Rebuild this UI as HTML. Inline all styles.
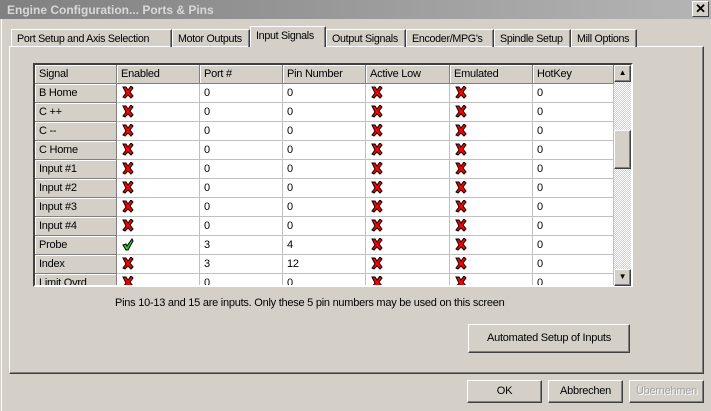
<!DOCTYPE html>
<html><head><style>
*{box-sizing:border-box;margin:0;padding:0}
body{width:711px;height:411px;background:#d4d0c8;font-family:"Liberation Sans",sans-serif;font-size:11px;letter-spacing:-0.25px;color:#000;position:relative;overflow:hidden}
.a{position:absolute}
.title{left:0;top:0;width:711px;height:19px;background:linear-gradient(90deg,#808080,#b5b5b5);color:#d8d8d8;font-weight:bold;font-size:12px;letter-spacing:0;padding:3px 0 0 7px}
.close{left:692px;top:1px;width:17px;height:16px;background:#d4d0c8;border:1px solid;border-color:#fff #404040 #404040 #fff;font-size:13px;text-align:center;line-height:13px;font-weight:bold}
.tab{top:29px;height:18px;border:1px solid;border-color:#fff #404040 transparent #fff;border-bottom:none;padding:3px 0 0 5px;white-space:nowrap;box-shadow:inset -1px 0 #808080;font-size:10.7px;letter-spacing:-0.3px;overflow:hidden}
.sel{top:26px;height:21px;z-index:2;background:#d4d0c8}
.panel{left:9px;top:46px;width:695px;height:328px;border:1px solid;border-color:#fff #404040 #404040 #fff;box-shadow:inset -1px -1px #808080}
.grid{left:33px;top:63px;width:600px;height:224px;border:2px solid;border-color:#404040 #fff #fff #404040;overflow:hidden;background:#fff}
.c{position:absolute;height:19px;border-right:1px solid #c0c0c0;border-bottom:1px solid #c0c0c0;padding:3px 0 0 4px;white-space:nowrap}
.h{background:#d4d0c8;border-right:1px solid #808080;border-bottom:1px solid #808080;box-shadow:inset 1px 1px #fff}
.s{background:#d4d0c8;border-right:1px solid #808080;border-bottom:1px solid #808080;box-shadow:inset 1px 1px #fff}
.btn{background:#d4d0c8;border:1px solid;border-color:#fff #404040 #404040 #fff;box-shadow:inset -1px -1px #808080;text-align:center}
</style></head><body>
<div class="a title">Engine Configuration... Ports &amp; Pins</div>
<div class="a close">✕</div>
<div class="a" style="left:1px;top:19px;width:1px;height:392px;background:#fff"></div>
<div class="a panel"></div>
<div class="a tab" style="left:11px;width:161px">Port Setup and Axis Selection</div>
<div class="a tab" style="left:172px;width:78px">Motor Outputs</div>
<div class="a tab sel" style="left:250px;width:76px">Input Signals</div>
<div class="a tab" style="left:326px;width:80px">Output Signals</div>
<div class="a tab" style="left:406px;width:88px">Encoder/MPG's</div>
<div class="a tab" style="left:494px;width:77px">Spindle Setup</div>
<div class="a tab" style="left:571px;width:66px">Mill Options</div>
<div class="a grid" id="g">
<div class="c h" style="left:0;top:0;width:82px">Signal</div>
<div class="c h" style="left:82px;top:0;width:83px">Enabled</div>
<div class="c h" style="left:165px;top:0;width:83px">Port #</div>
<div class="c h" style="left:248px;top:0;width:83px">Pin Number</div>
<div class="c h" style="left:331px;top:0;width:84px">Active Low</div>
<div class="c h" style="left:415px;top:0;width:83px">Emulated</div>
<div class="c h" style="left:498px;top:0;width:81px">HotKey</div>
</div>
<div class="a" style="left:614px;top:65px;width:17px;height:221px;background:repeating-conic-gradient(#fff 0 25%,#d4d0c8 0 50%) 0 0/2px 2px"></div>
<div class="a btn" style="left:614px;top:65px;width:17px;height:17px;font-size:8px;line-height:14px">▲</div>
<div class="a btn" style="left:614px;top:130px;width:17px;height:39px"></div>
<div class="a btn" style="left:614px;top:269px;width:17px;height:17px;font-size:8px;line-height:14px">▼</div>
<div class="a" style="left:115px;top:297px">Pins 10-13 and 15 are inputs. Only these 5 pin numbers may be used on this screen</div>
<div class="a btn" style="left:468px;top:324px;width:162px;height:29px;line-height:27px">Automated Setup of Inputs</div>
<div class="a btn" style="left:467px;top:380px;width:75px;height:23px;line-height:21px">OK</div>
<div class="a btn" style="left:548px;top:380px;width:75px;height:23px;line-height:21px">Abbrechen</div>
<div class="a btn" style="left:629px;top:380px;width:75px;height:23px;line-height:21px;color:#a0a0a0;text-shadow:1px 1px #fff">Übernehmen</div>
<script>
var X='<svg width="12" height="13" viewBox="0 0 12 13" style="position:absolute;left:5px;top:2px"><path d="M1 1 L4 1 L6 4 L9 0 L11 2 L8 6 L11 10 L9 12 L6 9 L3 12 L1 11 L4 7 Z" fill="#f00" stroke="#000" stroke-width="1"/></svg>';
var V='<svg width="12" height="13" viewBox="0 0 12 13" style="position:absolute;left:5px;top:2px"><path d="M1 7 L4 6 L5 8 L10 1 L11 3 L6 12 L4 12 Z" fill="#2c2" stroke="#000" stroke-width="1"/></svg>';
var rows=[["B Home",0,0,0],["C ++",0,0,0],["C --",0,0,0],["C Home",0,0,0],["Input #1",0,0,0],["Input #2",0,0,0],["Input #3",0,0,0],["Input #4",0,0,0],["Probe",1,3,4],["Index",0,3,12],["Limit Ovrd",0,0,0]];
var h='';rows.forEach(function(r,i){var t=19+i*19;
h+='<div class="c s" style="left:0;top:'+t+'px;width:82px">'+r[0]+'</div>';
h+='<div class="c" style="left:82px;top:'+t+'px;width:83px">'+(r[1]?V:X)+'</div>';
h+='<div class="c" style="left:165px;top:'+t+'px;width:83px">'+r[2]+'</div>';
h+='<div class="c" style="left:248px;top:'+t+'px;width:83px">'+r[3]+'</div>';
h+='<div class="c" style="left:331px;top:'+t+'px;width:84px">'+X+'</div>';
h+='<div class="c" style="left:415px;top:'+t+'px;width:83px">'+X+'</div>';
h+='<div class="c" style="left:498px;top:'+t+'px;width:81px">0</div>';});
document.getElementById('g').insertAdjacentHTML('beforeend',h);
</script>
</body></html>
